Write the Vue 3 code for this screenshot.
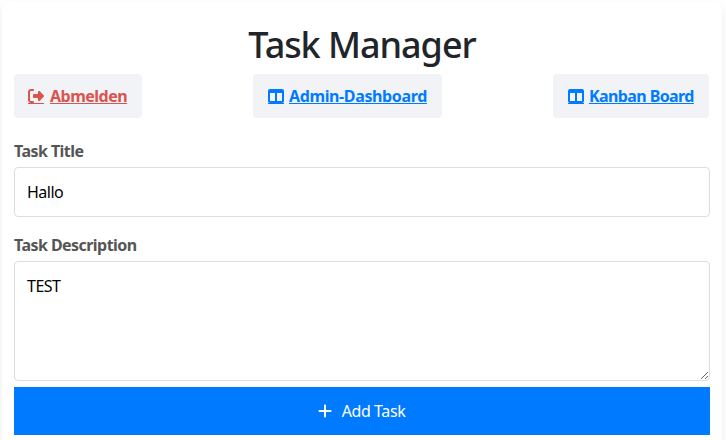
<script setup>
import { ref } from 'vue'

const title = ref('Hallo')
const description = ref('TEST')

const exitPath =
  'M377.9 105.9L500.7 228.7c7.2 7.2 11.3 17.1 11.3 27.3s-4.1 20.1-11.3 27.3L377.9 406.1c-6.4 6.4-15 9.9-24 9.9c-18.7 0-33.9-15.2-33.9-33.9l0-62.1-128 0c-17.7 0-32-14.3-32-32l0-64c0-17.7 14.3-32 32-32l128 0 0-62.1c0-18.7 15.2-33.9 33.9-33.9c9 0 17.6 3.6 24 9.9zM160 96L96 96c-17.7 0-32 14.3-32 32l0 256c0 17.7 14.3 32 32 32l64 0c17.7 0 32 14.3 32 32s-14.3 32-32 32l-64 0c-53 0-96-43-96-96L0 128C0 75 43 32 96 32l64 0c17.7 0 32 14.3 32 32s-14.3 32-32 32z'
const columnsPath =
  'M0 96C0 60.7 28.7 32 64 32l384 0c35.3 0 64 28.7 64 64l0 320c0 35.3-28.7 64-64 64L64 480c-35.3 0-64-28.7-64-64L0 96zm64 64l0 256 160 0 0-256L64 160zm384 0l-160 0 0 256 160 0 0-256z'
const plusPath =
  'M256 80c0-17.7-14.3-32-32-32s-32 14.3-32 32l0 144L48 224c-17.7 0-32 14.3-32 32s14.3 32 32 32l144 0 0 144c0 17.7 14.3 32 32 32s32-14.3 32-32l0-144 144 0c17.7 0 32-14.3 32-32s-14.3-32-32-32l-144 0 0-144z'

const links = [
  { key: 'logout', label: 'Abmelden', icon: exitPath },
  { key: 'admin', label: 'Admin-Dashboard', icon: columnsPath },
  { key: 'kanban', label: 'Kanban Board', icon: columnsPath },
]
</script>

<template>
  <main class="card">
    <h1 class="heading">Task Manager</h1>
    <nav class="links">
      <a v-for="link in links" :key="link.key" href="#" class="link" :class="link.key">
        <span class="icon-wrap">
          <svg class="icon" viewBox="0 0 512 512"><path :d="link.icon" /></svg>
        </span>
        <span class="text">{{ link.label }}</span>
      </a>
    </nav>
    <form @submit.prevent>
      <label class="label" for="title">Task Title</label>
      <input id="title" v-model="title" class="field" type="text" />
      <label class="label second" for="description">Task Description</label>
      <textarea id="description" v-model="description" class="field area"></textarea>
      <button class="submit" type="submit">
        <svg class="plus" viewBox="0 0 448 512"><path :d="plusPath" /></svg>
        <span>Add Task</span>
      </button>
    </form>
  </main>
</template>

<style>
body {
  background: #fff;
  overflow: hidden;
}
</style>

<style scoped>
.card {
  box-sizing: border-box;
  width: 720px;
  height: 460px;
  margin: 2px 4px 0 2px;
  padding: 20px 12px 0;
  border-radius: 8px;
  background: #fff;
  box-shadow: 0 4px 10px rgba(0, 0, 0, 0.08);
  font-family: "Segoe UI", "Noto Sans", "Open Sans", sans-serif;
  font-size: 16px;
}
.heading {
  margin: 0;
  height: 52px;
  line-height: 45px;
  font-size: 36px;
  font-weight: 500;
  letter-spacing: -1.05px;
  text-align: center;
  white-space: nowrap;
  color: #212529;
}
.links {
  display: flex;
  justify-content: space-between;
  padding-right: 1px;
}
.link {
  box-sizing: border-box;
  display: flex;
  align-items: center;
  gap: 5px;
  height: 44px;
  padding: 0 0 0 15px;
  border-radius: 4px;
  background: #f1f3f7;
  color: #007bff;
  font-weight: 700;
  white-space: nowrap;
  text-decoration: none;
}
.logout {
  gap: 6px;
  width: 128px;
  padding-left: 14px;
  color: #d9534f;
  letter-spacing: -0.5px;
}
.admin {
  width: 189px;
  letter-spacing: -0.37px;
}
.kanban {
  width: 156px;
  letter-spacing: -0.6px;
}
.icon-wrap {
  box-sizing: border-box;
  width: 16px;
  height: 16px;
  border-bottom: 1px solid currentColor;
}
.icon {
  display: block;
  width: 16px;
  height: 16px;
  fill: currentColor;
}
.text {
  line-height: 24px;
  text-decoration: underline;
  text-decoration-thickness: 1px;
  text-underline-offset: 1px;
  text-decoration-skip-ink: none;
}
.label {
  display: block;
  margin-top: 20px;
  height: 29px;
  line-height: 26px;
  font-weight: 700;
  font-size: 16px;
  letter-spacing: -0.55px;
  color: #555;
}
.second {
  margin-top: 15px;
}
.field {
  box-sizing: border-box;
  display: block;
  width: 696px;
  height: 50px;
  margin: 0;
  padding: 12px;
  border: 1px solid #ddd;
  border-radius: 4px;
  outline: none;
  background: #fff;
  color: #000;
  font-family: inherit;
  font-size: 16px;
  letter-spacing: -0.5px;
  line-height: 24px;
}
.area {
  height: 120px;
  resize: vertical;
}
.submit {
  display: flex;
  align-items: center;
  justify-content: center;
  gap: 10px;
  width: 696px;
  height: 48px;
  margin: 6px 0 0;
  padding: 0 1px 0 0;
  border: 0;
  background: #007bff;
  color: #fff;
  font-family: inherit;
  font-size: 16px;
  letter-spacing: -0.4px;
}
.plus {
  width: 14px;
  height: 16px;
  fill: currentColor;
}
</style>
